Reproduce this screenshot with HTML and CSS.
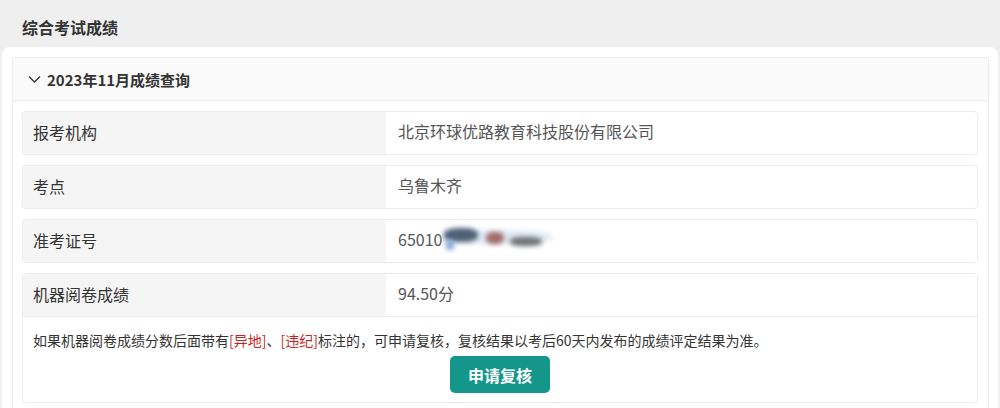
FILE: index.html
```html
<!DOCTYPE html>
<html>
<head>
  <meta charset="UTF-8">
  <title>综合考试成绩</title>
  <link rel="stylesheet" href="styles.css">
</head>
<body>
  <div class="page-title">综合考试成绩</div>
  <div class="card">
    <div class="panel">
      <div class="panel-head">
        <svg class="chevron" width="13" height="8" viewBox="0 0 13 8">
          <polyline points="1,1.5 6.5,7 12,1.5" fill="none" stroke="#333" stroke-width="1.3"/>
        </svg>
        <span>2023年11月成绩查询</span>
      </div>
      <div class="panel-body">
        <div class="row">
          <div class="cell-label">报考机构</div>
          <div class="cell-value">北京环球优路教育科技股份有限公司</div>
        </div>
        <div class="row">
          <div class="cell-label">考点</div>
          <div class="cell-value">乌鲁木齐</div>
        </div>
        <div class="row">
          <div class="cell-label">准考证号</div>
          <div class="cell-value">65010<span class="blur"><i class="b3"></i><i class="b1"></i><i class="b5"></i><i class="b2"></i><i class="b4"></i></span></div>
        </div>
        <div class="row row-last">
          <div class="row-line">
            <div class="cell-label">机器阅卷成绩</div>
            <div class="cell-value">94.50分</div>
          </div>
          <div class="note">
            <p>如果机器阅卷成绩分数后面带有<span class="red">[异地]</span>、<span class="red">[违纪]</span>标注的，可申请复核，复核结果以考后60天内发布的成绩评定结果为准。</p>
            <button class="btn-review">申请复核</button>
          </div>
        </div>
      </div>
    </div>
  </div>
</body>
</html>
```

FILE: styles.css
```css
body {
  margin: 0;
  background-color: #efefef;
  font-family: "Noto Sans CJK SC", "Liberation Sans", sans-serif;
  color: #333333;
}

.page-title {
  height: 47px;
  line-height: 54px;
  padding-left: 22px;
  font-size: 16px;
  font-weight: bold;
  box-sizing: border-box;
}

.card {
  margin: 0 2px;
  background-color: #ffffff;
  border-radius: 8px 8px 0 0;
  padding: 10px 9px 0 10px;
  height: 361px;
  box-sizing: border-box;
}

.panel {
  border: 1px solid #ebebeb;
  border-bottom: none;
  border-radius: 3px 3px 0 0;
  height: 100%;
  box-sizing: border-box;
}

.panel-head {
  display: flex;
  align-items: center;
  height: 42px;
  padding-left: 15px;
  background-color: #fafafa;
  border-bottom: 1px solid #ebebeb;
  font-size: 15px;
  font-weight: bold;
}

.chevron {
  margin-right: 6px;
}

.panel-body {
  padding: 10px 10px 0 9px;
}

.row {
  display: flex;
  border: 1px solid #ebebeb;
  border-radius: 4px;
  margin-bottom: 10px;
  height: 44px;
  box-sizing: border-box;
  font-size: 16px;
}

.cell-label {
  width: 353px;
  padding-left: 10px;
  padding-bottom: 3px;
  background-color: #f5f5f5;
  color: #333333;
  display: flex;
  align-items: center;
}

.cell-value {
  flex: 1;
  padding-left: 12px;
  padding-bottom: 4px;
  color: #555555;
  display: flex;
  align-items: center;
}

.blur {
  position: relative;
  display: inline-block;
  width: 120px;
  height: 22px;
}

.blur i {
  position: absolute;
  border-radius: 40%;
  filter: blur(2.5px);
}

.blur .b1 { left: 2px; top: 0px; width: 34px; height: 14px; background: #4e6075; }
.blur .b2 { left: 44px; top: 4px; width: 18px; height: 12px; background: #a06a6a; }
.blur .b3 { left: 0px; top: 2px; width: 110px; height: 14px; background: #d8e6f4; opacity: 0.8; }
.blur .b4 { left: 68px; top: 9px; width: 32px; height: 9px; background: #707070; }
.blur .b5 { left: 4px; top: 12px; width: 8px; height: 10px; background: #7fa4d8; }

.row-last {
  display: block;
  height: auto;
}

.row-line {
  display: flex;
  height: 42px;
  border-bottom: 1px solid #ebebeb;
}

.note {
  text-align: center;
  padding: 13px 10px 9px 10px;
}

.note p {
  margin: 0 0 6px 0;
  font-size: 14px;
  line-height: 20px;
  text-align: left;
  color: #333333;
}

.red {
  color: #cc1f1f;
}

.btn-review {
  width: 100px;
  height: 37px;
  border: none;
  border-radius: 5px;
  background-color: #15968a;
  color: #ffffff;
  font-family: "Noto Sans CJK SC", sans-serif;
  font-size: 16px;
  font-weight: bold;
  cursor: pointer;
}
```
